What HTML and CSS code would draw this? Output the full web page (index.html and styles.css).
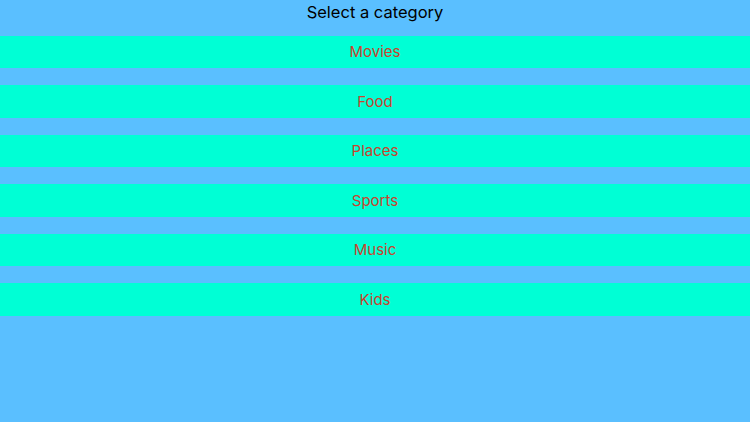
FILE: index.html
```html
<!DOCTYPE html>
<html>
<head>
    <title>Select a category</title>
    <link rel="stylesheet" href="styles.css">
</head>
<body>
    <div class="screen">
        <h1 class="title">Select a category</h1>

        <div class="categories">
            <button type="button" class="category">Movies</button>
            <button type="button" class="category">Food</button>
            <button type="button" class="category">Places</button>
            <button type="button" class="category">Sports</button>
            <button type="button" class="category">Music</button>
            <button type="button" class="category">Kids</button>
        </div>
    </div>
</body>
</html>
```

FILE: styles.css
```css
body {
    font-family: Inter, "Liberation Sans", Arial, sans-serif;
    background: #5abfff;
    margin: 0;
    padding: 0;
    height: 100vh;
}

.screen {
    display: flex;
    flex-direction: column;
}

.title {
    height: 35.5px;
    margin: 0;
    font-size: 16.5px;
    font-weight: normal;
    color: #000000;
    text-align: center;
    line-height: 24px;
}

.categories {
    display: flex;
    flex-direction: column;
    gap: 17px;
}

.category {
    height: 32.5px;
    background: #00ffd5;
    color: #c9432e;
    border: none;
    padding: 0;
    font-family: inherit;
    font-size: 15px;
    cursor: pointer;
}
```
